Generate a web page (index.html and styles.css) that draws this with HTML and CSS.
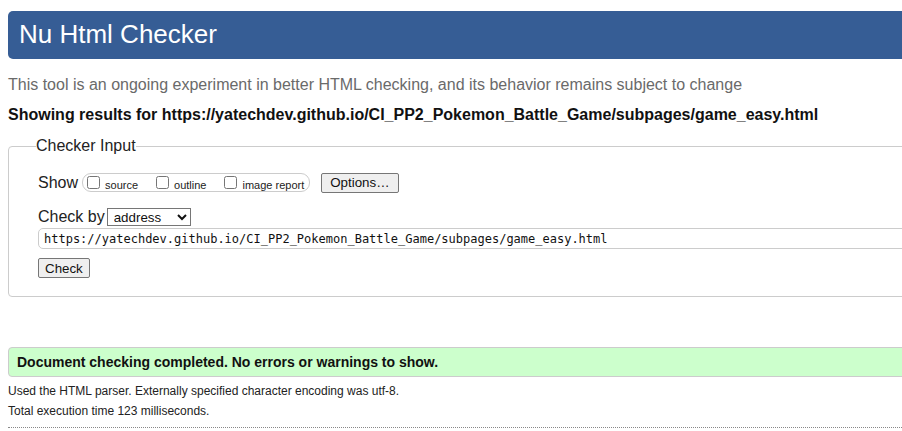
FILE: index.html
```html
<!DOCTYPE html>
<html lang="en">
<head>
<meta charset="utf-8">
<title>Showing results for https://yatechdev.github.io/CI_PP2_Pokemon_Battle_Game/subpages/game_easy.html - Nu Html Checker</title>
<link rel="stylesheet" href="styles.css">
</head>
<body>
<div class="page">
  <header class="banner"><h1 class="banner-title">Nu Html Checker</h1></header>
  <p class="about">This tool is an ongoing experiment in better HTML checking, and its behavior remains subject to change</p>
  <p class="results-for">Showing results for https://yatechdev.github.io/CI_PP2_Pokemon_Battle_Game/subpages/game_easy.html</p>
  <form class="checker-form">
    <fieldset class="checker">
      <legend class="checker-legend">Checker Input</legend>
      <div class="row show-row">
        <span class="row-label">Show</span>
        <span class="checks">
          <label class="check-item"><input type="checkbox" class="cb"><span>source</span></label>
          <label class="check-item"><input type="checkbox" class="cb"><span>outline</span></label>
          <label class="check-item"><input type="checkbox" class="cb"><span>image report</span></label>
        </span>
        <button type="button" class="btn btn-options">Options…</button>
      </div>
      <div class="row by-row">
        <label class="row-label">Check by</label>
        <select class="select"><option>address</option></select>
      </div>
      <div class="row url-row">
        <input class="url" type="text" value="https://yatechdev.github.io/CI_PP2_Pokemon_Battle_Game/subpages/game_easy.html">
      </div>
      <div class="row submit-row">
        <button type="button" class="btn btn-check">Check</button>
      </div>
    </fieldset>
  </form>
  <p class="success">Document checking completed. No errors or warnings to show.</p>
  <p class="details">Used the HTML parser. Externally specified character encoding was utf-8.</p>
  <p class="details">Total execution time 123 milliseconds.</p>
  <hr class="end">
</div>
</body>
</html>
```
FILE: styles.css
```css
html {
  overflow: hidden;
  background: #fff;
}
body {
  margin: 0;
  font-family: Arial, "Liberation Sans", sans-serif;
  color: #111;
}
.page {
  width: 1000px;
  padding: 11px 0 0 8px;
}
.banner {
  background: #365d95;
  border-radius: 5px 0 0 5px;
  height: 48px;
  padding-left: 11px;
}
.banner-title {
  margin: 0;
  font-weight: normal;
  font-size: 26px;
  line-height: 46px;
  color: #fff;
}
.about {
  margin: 17px 0 0;
  font-size: 16px;
  line-height: 18px;
  color: #6a6a6a;
}
.results-for {
  margin: 12px 0 0;
  font-size: 16px;
  line-height: 18px;
  font-weight: bold;
  color: #111;
}
.checker-form {
  margin: 13px 0 0;
}
.checker {
  margin: 0;
  border: 1px solid #ccc;
  border-radius: 4px;
  padding: 17px 0 18px 29px;
  min-width: 0;
}
.checker-legend {
  padding: 0;
  margin-left: -2px;
  font-size: 16px;
  line-height: 18px;
  color: #222;
}
.row {
  display: flex;
  align-items: center;
}
.row-label {
  font-size: 16px;
  line-height: 18px;
  color: #222;
}
.show-row {
  height: 21px;
}
.checks {
  display: flex;
  align-items: center;
  gap: 18px;
  margin-left: 4px;
  height: 17px;
  border: 1px solid #ccc;
  border-radius: 9px;
  padding: 0 5px 0 4px;
}
.check-item {
  display: flex;
  align-items: flex-end;
  gap: 5px;
  font-size: 11px;
  line-height: 12px;
  color: #222;
}
.cb {
  margin: 0;
  width: 13px;
  height: 13px;
}
.check-item span {
  position: relative;
  top: 2px;
}
.btn {
  font-family: Arial, "Liberation Sans", sans-serif;
  font-size: 13.33px;
  height: 20px;
  background: #efefef;
  border: 1px solid #767676;
  border-radius: 2px;
  color: #111;
  padding: 0 6px;
}
.btn-options {
  margin-left: 11px;
  padding: 0 8px;
}
.by-row {
  margin-top: 15px;
}
.select {
  margin-left: 2px;
  width: 84px;
  height: 18px;
  font-family: Arial, "Liberation Sans", sans-serif;
  font-size: 13.33px;
  border: 1px solid #767676;
  border-radius: 0;
  background: #fff;
  color: #111;
  padding: 0 0 0 2px;
}
.url-row {
  margin-top: 2px;
}
.url {
  width: 1000px;
  height: 21px;
  box-sizing: border-box;
  border: 1px solid #ccc;
  border-radius: 5px;
  padding: 0 5px;
  font-family: "DejaVu Sans Mono", "Liberation Mono", monospace;
  font-size: 12px;
  color: #111;
  outline: none;
}
.submit-row {
  margin-top: 9px;
}
.success {
  margin: 50px 0 0;
  height: 28px;
  line-height: 28px;
  background: #cfc;
  border: 1px solid #ccc;
  border-radius: 4px 0 0 4px;
  padding-left: 8px;
  font-size: 14px;
  font-weight: bold;
  color: #111;
}
.details {
  margin: 0;
  font-size: 12px;
  line-height: 20px;
  color: #222;
}
.success + .details {
  margin-top: 4px;
}
.end {
  margin: 6px 0 0;
  border: 0;
  border-top: 1px dotted #888;
  height: 0;
}
```
